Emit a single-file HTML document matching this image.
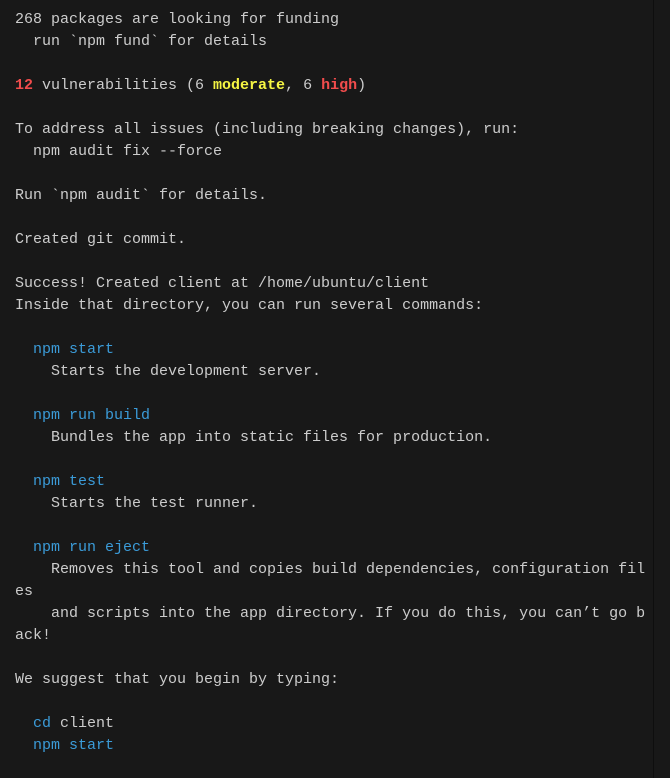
<!DOCTYPE html>
<html><head><style>
html,body{margin:0;padding:0;background:#181818;width:670px;height:778px;overflow:hidden}
pre{margin:0;position:absolute;left:15px;top:9px;font-family:"Liberation Mono",monospace;font-size:15px;line-height:22px;color:#cccccc;letter-spacing:0}
.r{color:#f14c4c;font-weight:bold}.y{color:#f5f543;font-weight:bold}.b{color:#3b9bd8}
.sb{position:absolute;left:653px;top:0;width:1px;height:778px;background:#0e0e0e}
</style></head><body>
<pre>268 packages are looking for funding
  run `npm fund` for details

<span class="r">12</span> vulnerabilities (6 <span class="y">moderate</span>, 6 <span class="r">high</span>)

To address all issues (including breaking changes), run:
  npm audit fix --force

Run `npm audit` for details.

Created git commit.

Success! Created client at /home/ubuntu/client
Inside that directory, you can run several commands:

  <span class="b">npm start</span>
    Starts the development server.

  <span class="b">npm run build</span>
    Bundles the app into static files for production.

  <span class="b">npm test</span>
    Starts the test runner.

  <span class="b">npm run eject</span>
    Removes this tool and copies build dependencies, configuration fil
es
    and scripts into the app directory. If you do this, you can’t go b
ack!

We suggest that you begin by typing:

  <span class="b">cd</span> client
  <span class="b">npm start</span></pre>
<div class="sb"></div>
</body></html>
